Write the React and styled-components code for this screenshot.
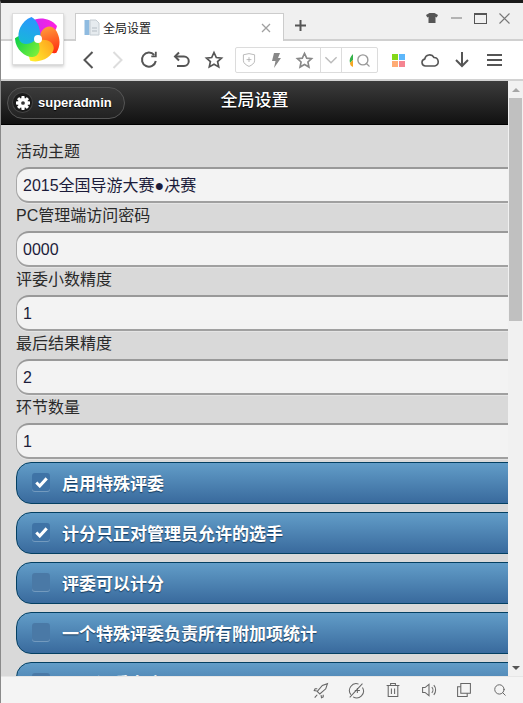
import styled, { createGlobalStyle } from 'styled-components';
import { Search } from 'lucide-react';

const GlobalStyle = createGlobalStyle`
    html, body {
        margin: 0;
        padding: 0;
        overflow: hidden;
        background: #f0f0f0;
    }
`

const FONT = `"Liberation Sans", "Noto Sans CJK SC", sans-serif`;

const fields = [
    { label: '活动主题', value: '2015全国导游大赛●决赛' },
    { label: 'PC管理端访问密码', value: '0000' },
    { label: '评委小数精度', value: '1' },
    { label: '最后结果精度', value: '2' },
    { label: '环节数量', value: '1' },
];

const toggles = [
    { label: '启用特殊评委', checked: true },
    { label: '计分只正对管理员允许的选手', checked: true },
    { label: '评委可以计分', checked: false },
    { label: '一个特殊评委负责所有附加项统计', checked: false },
    { label: '显示评委名字', checked: false },
];

const Logo = () => (
    <LogoBox>
        <svg width="46" height="46" viewBox="-23 -23 46 46">
            <defs>
                <linearGradient id="b1" x1="0" y1="0" x2="1" y2="0"><stop offset="0" stopColor="#c92bf2" /><stop offset="1" stopColor="#ff1fe0" /></linearGradient>
                <linearGradient id="b2" x1="0" y1="0" x2="1" y2="0"><stop offset="0" stopColor="#ff9a3a" /><stop offset="1" stopColor="#ff2a10" /></linearGradient>
                <linearGradient id="b3" x1="0" y1="0" x2="1" y2="0"><stop offset="0" stopColor="#ffa51e" /><stop offset="1" stopColor="#fff12e" /></linearGradient>
                <linearGradient id="b4" x1="0" y1="0" x2="1" y2="0"><stop offset="0" stopColor="#7cf03a" /><stop offset="1" stopColor="#0ccf4a" /></linearGradient>
                <linearGradient id="b5" x1="0" y1="0" x2="1" y2="0"><stop offset="0" stopColor="#18b8d8" /><stop offset="1" stopColor="#2a96ff" /></linearGradient>
            </defs>
            {[1, 2, 3, 4, 5].map((n) => (
                <path
                    key={n}
                    transform={`rotate(${(n - 1) * 72})`}
                    fill={`url(#b${n})`}
                    d="M -3 -3 C -9 -7 -11 -14 -6 -18 C -1 -22 12 -22 19 -13 C 18 -6 9 0 2 2 Z"
                />
            ))}
            <circle r="4" fill="#fff" />
        </svg>
    </LogoBox>
);

const IconStroke = ({ size = 20, width = 2, color = '#555', children }) => (
    <svg width={size} height={size} viewBox="0 0 20 20" fill="none" stroke={color} strokeWidth={width}>
        {children}
    </svg>
);

const StarPath = () => <path d="M10 2.5l2.3 5 5.2.6-3.9 3.5 1.1 5.3-4.7-2.7-4.7 2.7 1.1-5.3-3.9-3.5 5.2-.6z" />;

const App = () => {
    return (
        <Window>
            <GlobalStyle />
            <Logo />
            <TitleBar>
                <Tab>
                    <svg width="16" height="17" viewBox="0 0 16 17">
                        <rect x="0.5" y="1" width="5" height="15" fill="#8fbbe0" />
                        <path d="M6 1h6l3 3v12H6z" fill="#e6ebef" stroke="#c4ccd2" />
                        <path d="M8 9h5M8 12h5" stroke="#b5bdc4" />
                    </svg>
                    <TabTitle>全局设置</TabTitle>
                    <TabClose>
                        <svg width="10" height="10" viewBox="0 0 10 10" stroke="#a0a0a0" strokeWidth="1.3">
                            <path d="M1 1l8 8M9 1l-8 8" />
                        </svg>
                    </TabClose>
                </Tab>
                <NewTab>
                    <svg width="11" height="11" viewBox="0 0 11 11" stroke="#555" strokeWidth="2">
                        <path d="M5.5 0v11M0 5.5h11" />
                    </svg>
                </NewTab>
                <WindowControls>
                    <WinButton>
                        <svg width="12" height="10" viewBox="0 0 12 10" fill="#555">
                            <path d="M3.5 0h5L12 2l-1.300 2.500-1.200-.7V10h-7V3.800l-1.200.7L0 2z" />
                        </svg>
                    </WinButton>
                    <WinButton>
                        <svg width="11" height="2" viewBox="0 0 11 2" stroke="#777"><path d="M0 1h11" /></svg>
                    </WinButton>
                    <WinButton>
                        <svg width="13" height="11" viewBox="0 0 13 11" fill="none" stroke="#555">
                            <rect x="0.5" y="0.5" width="12" height="10" />
                            <path d="M0 1.500h13" />
                        </svg>
                    </WinButton>
                    <WinButton>
                        <svg width="11" height="11" viewBox="0 0 11 11" stroke="#777" strokeWidth="1.100"><path d="M.5.500l10 10M10.500.500l-10 10" /></svg>
                    </WinButton>
                </WindowControls>
            </TitleBar>

            <Toolbar>
                <ToolSlot $w={27}>
                    <IconStroke size={20}><path d="M13.500 2L5.500 10l8 8" /></IconStroke>
                </ToolSlot>
                <ToolSlot $w={30}>
                    <IconStroke size={20} color="#ddd"><path d="M6.500 2l8 8-8 8" /></IconStroke>
                </ToolSlot>
                <ToolSlot $w={34}>
                    <IconStroke size={20}>
                        <path d="M16.800 11a7 7 0 1 1-1.600-6" />
                        <path d="M16.800 1.800v4.500h-4.500" strokeWidth="1.800" />
                    </IconStroke>
                </ToolSlot>
                <ToolSlot $w={32}>
                    <IconStroke size={20}>
                        <path d="M3.500 6.500h8.500a4.700 4.700 0 0 1 0 9.500H5" />
                        <path d="M7 2.500L3 6.500l4 4" />
                    </IconStroke>
                </ToolSlot>
                <ToolSlot $w={32}>
                    <IconStroke size={20} width={1.700}><StarPath /></IconStroke>
                </ToolSlot>
                <AddressBox>
                    <AddressPart $w={85} $border>
                        <ToolSlot $w={31}>
                            <IconStroke size={16} width={1} color="#aaa">
                                <path d="M3 3.500L10 2l7 1.500V11c0 3-3.500 5.500-7 7-3.500-1.500-7-4-7-7z" />
                                <path d="M7 9.500h6M10 6.500v6" />
                            </IconStroke>
                        </ToolSlot>
                        <ToolSlot $w={18}>
                            <svg width="10" height="15" viewBox="0 0 10 15" fill="#888"><path d="M3 0h6L7 5h3L3 15l1.500-7H1z" /></svg>
                        </ToolSlot>
                        <ToolSlot $w={36}>
                            <IconStroke size={19} width={1.700} color="#888"><StarPath /></IconStroke>
                        </ToolSlot>
                    </AddressPart>
                    <AddressPart $w={21} $border>
                        <IconStroke size={14} color="#bbb"><path d="M2 6l8 8 8-8" /></IconStroke>
                    </AddressPart>
                    <AddressPart $w={35}>
                        <svg width="5" height="13" viewBox="0 0 5 13">
                            <path d="M4 0C1 3 0 6 1 9l3-3z" fill="#35b24a" />
                            <path d="M1 9c0 2 1 3 3 4V6z" fill="#f5a623" />
                        </svg>
                        <Search size={15} color="#999" strokeWidth={2.200} />
                    </AddressPart>
                </AddressBox>
                <ToolRight>
                    <ToolSlot $w={32}>
                        <ColorGrid>
                            <ColorCell $c="#84d81a" />
                            <ColorCell $c="#5db7fb" />
                            <ColorCell $c="#ffab74" />
                            <ColorCell $c="#f58490" />
                        </ColorGrid>
                    </ToolSlot>
                    <ToolSlot $w={32}>
                        <svg width="18" height="14" viewBox="0 0 18 14" fill="none" stroke="#555" strokeWidth="1.600">
                            <path d="M4.500 13a3.500 3.500 0 0 1-.8-6.900A5 5 0 0 1 13 4.500a4.300 4.300 0 0 1 .8 8.500z" />
                        </svg>
                    </ToolSlot>
                    <ToolSlot $w={32}>
                        <svg width="14" height="16" viewBox="0 0 14 16" fill="none" stroke="#555" strokeWidth="2">
                            <path d="M7 0v14M1 8l6 6 6-6" />
                        </svg>
                    </ToolSlot>
                    <ToolSlot $w={32}>
                        <svg width="15" height="14" viewBox="0 0 15 14" stroke="#555" strokeWidth="2">
                            <path d="M0 2h15M0 7h15M0 12h15" />
                        </svg>
                    </ToolSlot>
                </ToolRight>
            </Toolbar>

            <Main>
                <Page>
                    <Header>
                        <AdminButton>
                            <GearDot>
                                <svg width="14" height="14" viewBox="0 0 12 12">
                                    <g fill="#fff">
                                        {[0, 45, 90, 135].map((a) => (
                                            <rect key={a} x="4.600" y="0" width="2.800" height="12" rx="0.6" transform={`rotate(${a} 6 6)`} />
                                        ))}
                                        <circle cx="6" cy="6" r="4.200" />
                                    </g>
                                    <circle cx="6" cy="6" r="1.600" fill="#333" />
                                </svg>
                            </GearDot>
                            superadmin
                        </AdminButton>
                        <HeaderTitle>全局设置</HeaderTitle>
                    </Header>
                    <Form>
                        {fields.map((f) => (
                            <div key={f.label}>
                                <FieldLabel>{f.label}</FieldLabel>
                                <FieldValue>{f.value}</FieldValue>
                            </div>
                        ))}
                        <ToggleList>
                            {toggles.map((t) => (
                                <Toggle key={t.label}>
                                    <CheckMark $checked={t.checked}>
                                        {t.checked && (
                                            <svg width="13" height="11" viewBox="0 0 12 10" fill="none" stroke="#fff" strokeWidth="2.800">
                                                <path d="M1.200 5l3.200 3.200L10.800 1.200" />
                                            </svg>
                                        )}
                                    </CheckMark>
                                    {t.label}
                                </Toggle>
                            ))}
                        </ToggleList>
                    </Form>
                </Page>
                <ScrollBar>
                    <ScrollUp />
                    <ScrollThumb />
                    <ScrollDown />
                </ScrollBar>
            </Main>

            <StatusBar>
                <StatusIcon>
                    <IconStroke size={17} width={1.300} color="#666">
                        <path d="M7 13l-2-2 6-7 6-2-2 6-7 6z" />
                        <path d="M5 8H2.500L1.500 10l3 .5M12 15v2.500l-2 1-.5-3M5 15l-3 3.500" />
                    </IconStroke>
                </StatusIcon>
                <StatusIcon>
                    <IconStroke size={17} width={1.200} color="#666">
                        <path d="M3.500 15a8 8 0 0 1 9-12.500M17 6.500A8 8 0 0 1 6 17.500" />
                        <path d="M8 10h6M11 7v6M2 18L17 2" />
                    </IconStroke>
                </StatusIcon>
                <StatusIcon>
                    <IconStroke size={16} width={1.300} color="#666">
                        <path d="M2 4.500h16M7 4.500V2h6v2.500M4 4.500V18h12V4.500M8 8v7M12 8v7" />
                    </IconStroke>
                </StatusIcon>
                <StatusIcon>
                    <IconStroke size={16} width={1.300} color="#666">
                        <path d="M2 7v6h3l5 4V3L5 7zM13.500 6.500a5 5 0 0 1 0 7M16 4a9 9 0 0 1 0 12" />
                    </IconStroke>
                </StatusIcon>
                <StatusIcon>
                    <IconStroke size={16} width={1.300} color="#666">
                        <path d="M6 2h12v12H6z" />
                        <path d="M6 6H2v12h12v-4" />
                    </IconStroke>
                </StatusIcon>
                <StatusIcon>
                    <Search size={14} color="#666" strokeWidth={1.700} />
                </StatusIcon>
            </StatusBar>
        </Window>
    )
}

// styling using the styled components
const Window = styled.div`
    position: relative;
    display: flex;
    flex-direction: column;
    width: 523px;
    height: 703px;
    box-sizing: border-box;
    border-top: 3px solid #1a1a1a;
    border-left: 1px solid #8a8a8a;
    overflow: hidden;
    font-family: ${FONT};
`
const LogoBox = styled.div`
    position: absolute;
    top: 10px;
    left: 11px;
    z-index: 3;
    display: grid;
    place-items: center;
    width: 50px;
    height: 50px;
    background: #fff;
    border: 1px solid #ddd;
    box-shadow: 0 2px 3px rgba(0, 0, 0, 0.18);
`
const TitleBar = styled.div`
    display: flex;
    align-items: flex-end;
    height: 38px;
    flex: none;
    box-sizing: border-box;
    padding-left: 74px;
    background: #f0f0f0;
    border-bottom: 2px solid #d0d0d0;
`
const Tab = styled.div`
    display: flex;
    align-items: center;
    width: 209px;
    height: 28px;
    margin-bottom: -2px;
    box-sizing: border-box;
    padding: 0 12px 0 8px;
    background: #fff;
    border: 1px solid #cccccc;
    border-bottom: none;
`
const TabTitle = styled.span`
    flex: 1;
    margin-left: 3px;
    font-size: 12px;
    color: #222;
`
const TabClose = styled.span`
    display: flex;
`
const NewTab = styled.div`
    display: grid;
    place-items: center;
    width: 32px;
    height: 27px;
`
const WindowControls = styled.div`
    display: flex;
    align-self: flex-start;
    margin-left: auto;
    padding: 8px 7px 0 0;
`
const WinButton = styled.div`
    display: grid;
    place-items: center;
    width: 24px;
    height: 14px;
`
const Toolbar = styled.div`
    display: flex;
    align-items: center;
    height: 40px;
    flex: none;
    box-sizing: border-box;
    padding-left: 74px;
    background: #fff;
    border-bottom: 2px solid #d2d2d2;
`
const ToolSlot = styled.div`
    display: grid;
    place-items: center;
    flex: none;
    width: ${(props) => props.$w}px;
    height: 26px;
`
const AddressBox = styled.div`
    display: flex;
    height: 26px;
    width: 143px;
    margin-left: 5px;
    box-sizing: border-box;
    background: #fff;
    border: 1px solid #dcdcdc;
    border-radius: 2px;
`
const AddressPart = styled.div`
    display: flex;
    align-items: center;
    justify-content: center;
    gap: 2px;
    width: ${(props) => props.$w}px;
    flex: none;
    box-sizing: border-box;
    border-right: ${(props) => (props.$border ? '1px solid #dcdcdc' : 'none')};
`
const ToolRight = styled.div`
    display: flex;
    margin-left: 4px;
`
const ColorGrid = styled.div`
    display: grid;
    grid-template-columns: 6px 6px;
    grid-template-rows: 6px 6px;
    gap: 1px;
`
const ColorCell = styled.i`
    display: block;
    background: ${(props) => props.$c};
`
const Main = styled.div`
    display: flex;
    flex: 1;
    min-height: 0;
`
const Page = styled.div`
    flex: 1;
    min-width: 0;
    overflow: hidden;
    background: #d9d9d9;
`
const Header = styled.div`
    position: relative;
    display: flex;
    align-items: center;
    height: 44px;
    box-sizing: border-box;
    padding-left: 6px;
    background: linear-gradient(#3c3c3c, #111111);
    border-bottom: 1px solid #000;
`
const AdminButton = styled.div`
    display: flex;
    align-items: center;
    gap: 6px;
    width: 118px;
    height: 32px;
    box-sizing: border-box;
    padding-left: 5px;
    border: 1px solid #555;
    border-radius: 16px;
    background: linear-gradient(#3a3a3a, #222222);
    font-size: 13px;
    font-weight: 700;
    color: #fff;
    text-shadow: 0 1px 1px #000;
`
const GearDot = styled.span`
    display: grid;
    place-items: center;
    width: 19px;
    height: 19px;
    border-radius: 50%;
    background: #1b1b1b;
    box-shadow: 0 0 0 1px #444;
`
const HeaderTitle = styled.h1`
    position: absolute;
    top: 8px;
    left: 0;
    right: 0;
    margin: 0;
    line-height: 24px;
    text-align: center;
    font-size: 17px;
    font-weight: 500;
    color: #fff;
    text-shadow: 0 1px 1px #000;
    pointer-events: none;
`
const Form = styled.div`
    width: 530px;
    box-sizing: border-box;
    padding: 14px 0 0 15px;
`
const FieldLabel = styled.div`
    height: 24px;
    margin-bottom: 4px;
    line-height: 26px;
    font-size: 16px;
    color: #2a2a2a;
`
const FieldValue = styled.div`
    height: 36px;
    box-sizing: border-box;
    padding-left: 6px;
    line-height: 33px;
    font-size: 16px;
    color: #1c1c3a;
    background: #f3f3f3;
    border: 1px solid #a8a8a8;
    border-top: 2px solid #999;
    border-bottom: 2px solid #a0a0a0;
    border-radius: 13px 0 0 13px;
    box-shadow: 0 1px 0 #e4e4e4;
`
const ToggleList = styled.div`
    display: flex;
    flex-direction: column;
    gap: 8px;
    margin-top: 3px;
`
const Toggle = styled.div`
    display: flex;
    align-items: center;
    height: 42px;
    flex: none;
    box-sizing: border-box;
    padding: 0 0 2px 15px;
    gap: 12px;
    background: linear-gradient(#629dc8, #396a9d);
    border: 1px solid #044062;
    border-radius: 15px 0 0 15px;
    font-size: 17px;
    font-weight: 700;
    color: #fff;
    text-shadow: 0 1px 1px #14395c;
`
const CheckMark = styled.span`
    display: grid;
    place-items: center;
    width: 18px;
    height: 18px;
    flex: none;
    border-radius: 3px;
    background: ${(props) => (props.$checked ? '#3f73a6' : '#4a79a6')};
    box-shadow: 0 1px 0 rgba(255, 255, 255, 0.25);
`
const ScrollBar = styled.div`
    display: flex;
    flex-direction: column;
    align-items: center;
    width: 15px;
    flex: none;
    background: #f1f1f1;
`
const ScrollUp = styled.i`
    display: block;
    width: 0;
    height: 0;
    margin: 7px 0 6px;
    border-left: 4px solid transparent;
    border-right: 4px solid transparent;
    border-bottom: 4px solid #a6a6a6;
`
const ScrollThumb = styled.div`
    width: 13px;
    height: 223px;
    background: #c0c0c0;
`
const ScrollDown = styled.i`
    display: block;
    width: 0;
    height: 0;
    margin: auto 0 6px;
    border-left: 4px solid transparent;
    border-right: 4px solid transparent;
    border-top: 4px solid #555;
`
const StatusBar = styled.div`
    display: flex;
    justify-content: flex-end;
    align-items: center;
    height: 27px;
    flex: none;
    box-sizing: border-box;
    padding-right: 5px;
    background: #f4f4f4;
    border-top: 1px solid #e6e6e6;
`
const StatusIcon = styled.div`
    display: grid;
    place-items: center;
    width: 35.800px;
    height: 20px;
`

export default App;
